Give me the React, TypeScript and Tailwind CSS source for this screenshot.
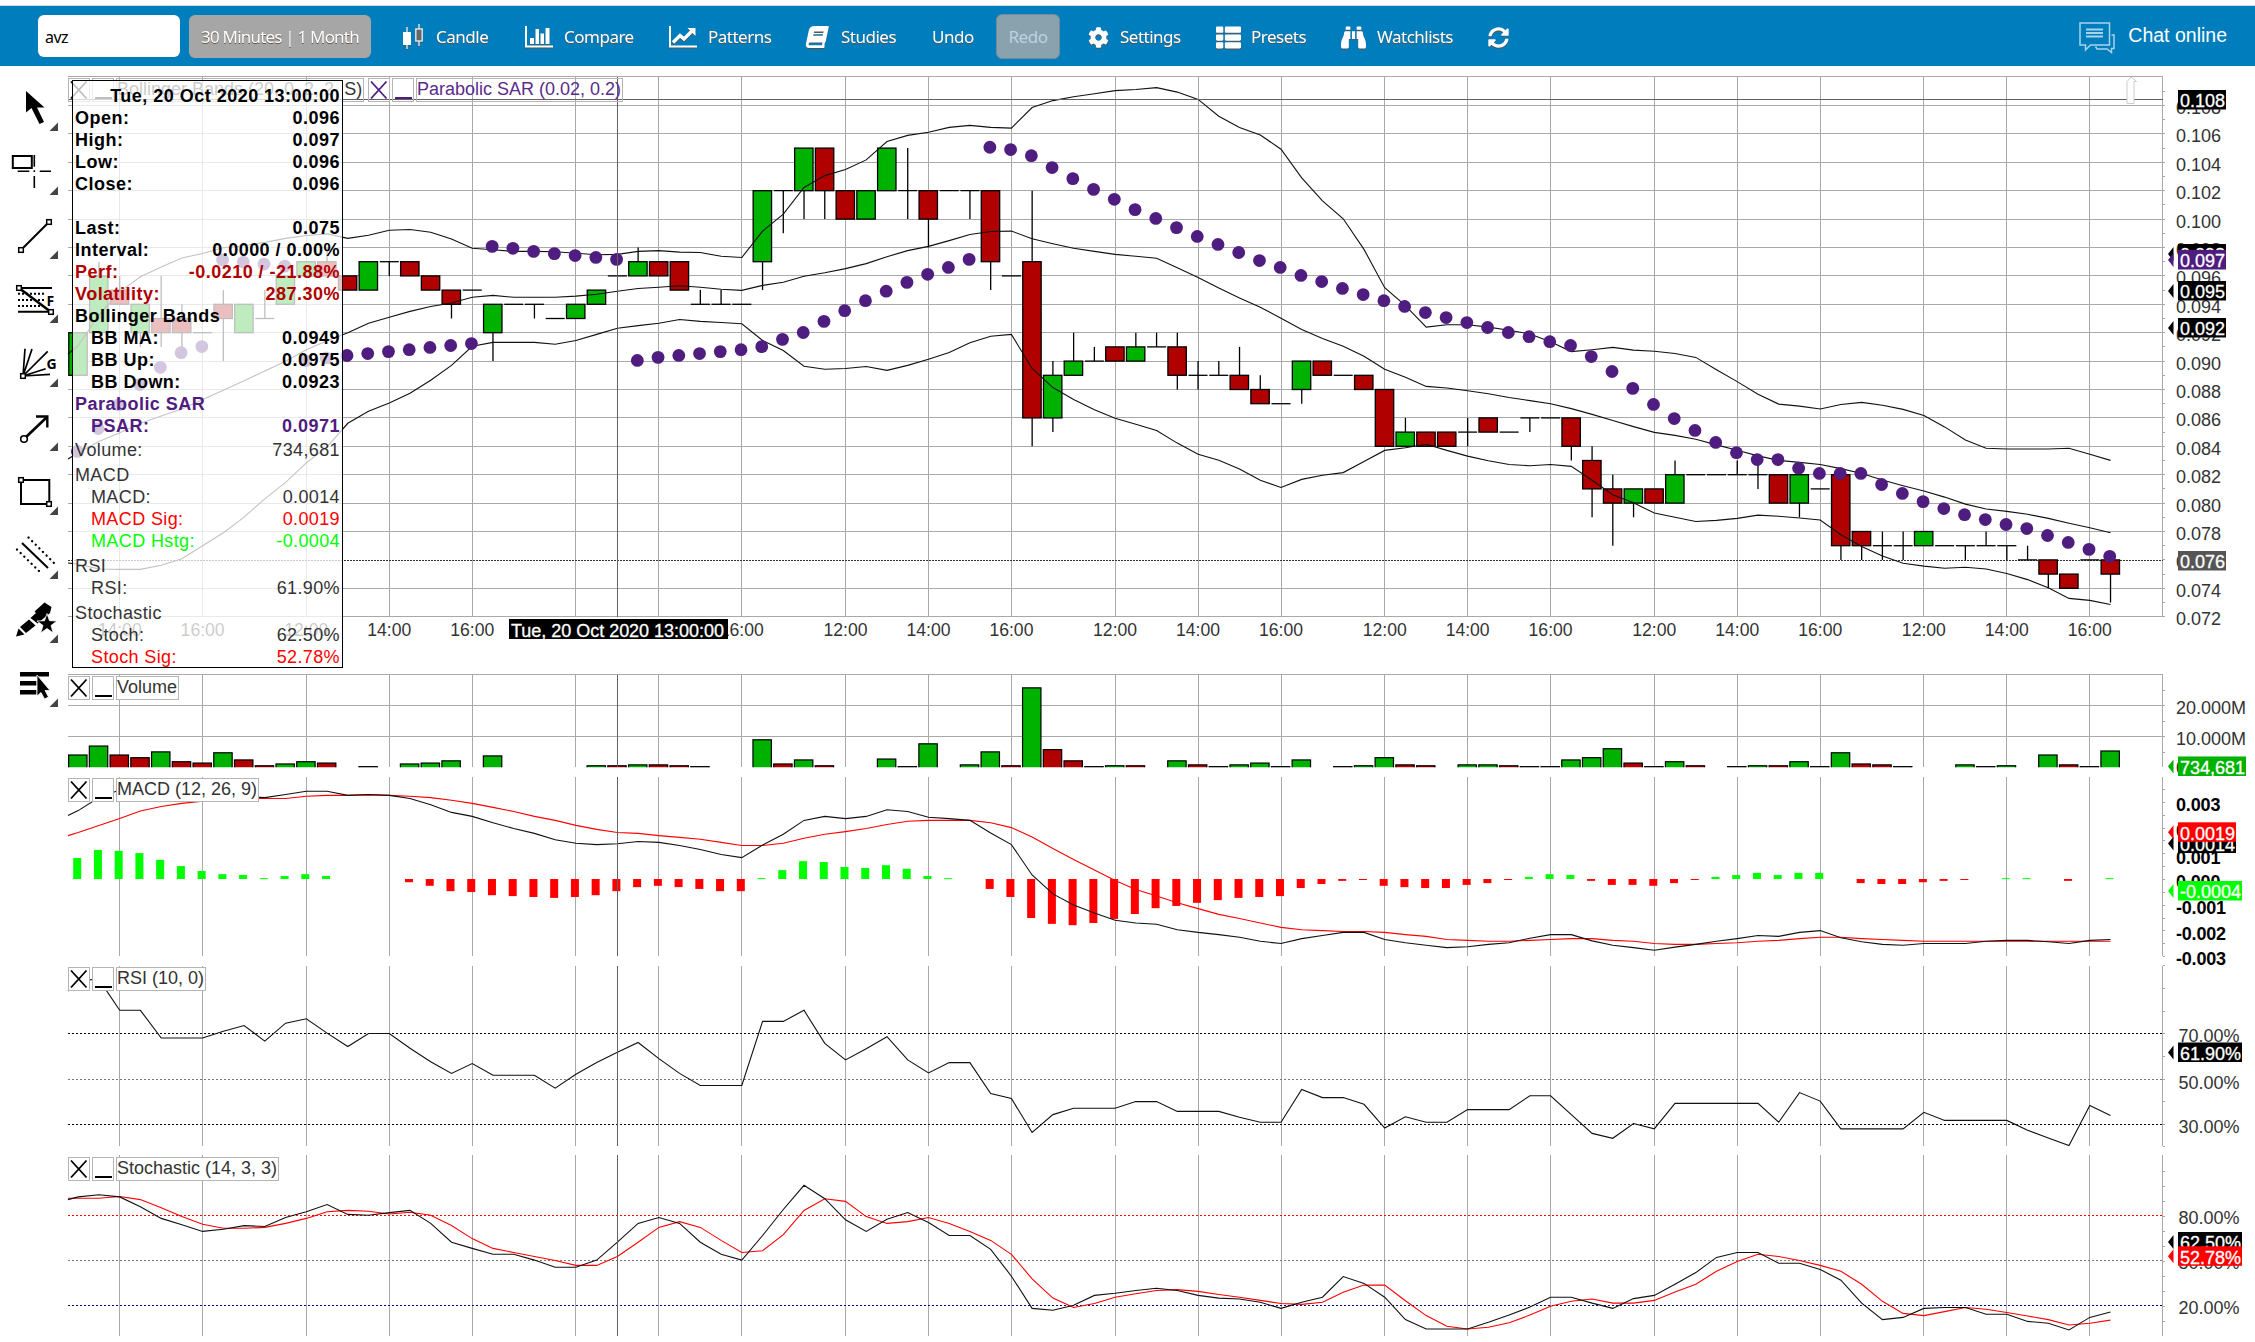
import React from 'react';
import { FaCog, FaThList, FaBinoculars, FaSyncAlt, FaBook } from 'react-icons/fa';

const FIRST_X = 78.2;
const STEP = 20.738;
const LEFT = 68;
const RIGHT = 2162.5;
const CURSOR_X = 617.5;

const GREEN = '#00b200';
const RED = '#b00000';
const PURPLE = '#4f1c80';
const GRID = '#a9a9a9';

const barX = (i: number) => FIRST_X + i * STEP;
const priceY = (p: number) => 105.5 + (108 - p) * 14.2;

const chunk = (k: number, top: number, values: number[]) => values.map((v) => top + v / k);
const lower = (values: (number | null)[]) => values.map((v) => (v === null ? null : 640 + v / 2.2336));

const toPath = (values: (number | null)[], start?: number) => {
  const points = values.map((y, i) => `${barX(i).toFixed(1)},${(y ?? 0).toFixed(1)}`);
  if (start !== undefined) points.unshift(`${LEFT},${start.toFixed(1)}`);
  return points.join(' ');
};

const gridBars = [
  { i: 2, label: '14:00' }, { i: 6, label: '16:00' }, { i: 11, label: '12:00' }, { i: 15, label: '14:00' },
  { i: 19, label: '16:00' }, { i: 24, label: '' }, { i: 28, label: '' }, { i: 32, label: '16:00' },
  { i: 37, label: '12:00' }, { i: 41, label: '14:00' }, { i: 45, label: '16:00' }, { i: 50, label: '12:00' },
  { i: 54, label: '14:00' }, { i: 58, label: '16:00' }, { i: 63, label: '12:00' }, { i: 67, label: '14:00' },
  { i: 71, label: '16:00' }, { i: 76, label: '12:00' }, { i: 80, label: '14:00' }, { i: 84, label: '16:00' },
  { i: 89, label: '12:00' }, { i: 93, label: '14:00' }, { i: 97, label: '16:00' },
];

// open, close, high, low
const candles: number[][] = [
  [89, 92, 92, 89], [92, 96, 97, 92], [95, 94, 96, 94], [92, 94, 94, 91], [93, 92, 96, 91], [93, 92, 94, 91],
  [92, 92, 92, 92], [94, 93, 95, 90], [92, 94, 94, 92], [93, 93, 95, 93], [94, 96, 96, 94], [96, 97, 97, 96],
  [97, 96, 98, 96], [96, 95, 96, 95], [95, 97, 97, 95], [97, 97, 97, 96], [97, 96, 97, 96], [96, 95, 96, 95],
  [95, 94, 95, 93], [95, 95, 95, 95], [92, 94, 94, 90], [94, 94, 94, 94], [94, 94, 94, 93], [93, 93, 93, 93],
  [93, 94, 94, 93], [94, 95, 95, 94], [96, 96, 96, 96], [96, 97, 98, 96], [97, 96, 97, 96], [97, 95, 97, 95],
  [94, 94, 95, 94], [94, 94, 95, 94], [94, 94, 94, 94], [97, 102, 102, 95], [102, 102, 102, 99], [102, 105, 105, 100],
  [105, 102, 105, 100], [102, 100, 102, 100], [100, 102, 102, 100], [102, 105, 105, 102], [102, 102, 105, 100],
  [102, 100, 102, 98], [102, 102, 102, 102], [102, 102, 102, 100], [102, 97, 102, 95], [96, 96, 96, 96],
  [97, 86, 102, 84], [86, 89, 90, 85], [89, 90, 92, 89], [90, 90, 91, 90], [91, 90, 91, 90], [90, 91, 92, 90],
  [91, 91, 92, 91], [91, 89, 92, 88], [89, 89, 90, 88], [89, 89, 90, 89], [89, 88, 91, 88], [88, 87, 89, 87],
  [87, 87, 87, 87], [88, 90, 90, 87], [90, 89, 90, 89], [89, 89, 89, 89], [89, 88, 89, 88], [88, 84, 88, 84],
  [84, 85, 86, 84], [85, 84, 85, 84], [85, 84, 85, 84], [85, 85, 86, 84], [86, 85, 86, 85], [85, 85, 85, 85],
  [86, 86, 86, 85], [86, 86, 86, 86], [86, 84, 86, 83], [83, 81, 84, 79], [81, 80, 82, 77], [80, 81, 81, 79],
  [81, 80, 81, 80], [80, 82, 83, 80], [82, 82, 82, 82], [82, 82, 82, 82], [82, 82, 83, 82], [82, 82, 83, 81],
  [82, 80, 82, 80], [80, 82, 82, 79], [81, 81, 81, 81], [82, 77, 82, 76], [78, 77, 78, 76], [77, 77, 78, 76],
  [77, 77, 78, 76], [77, 78, 78, 77], [77, 77, 77, 77], [77, 77, 77, 76], [77, 77, 78, 77], [77, 77, 77, 76],
  [76, 76, 77, 76], [76, 75, 76, 74], [75, 74, 75, 74], [76, 76, 76, 76], [76, 75, 76, 73],
];

const bandUp = [
  ...chunk(2.45, 60, [700, 625, 568, 531, 507, 485, 474, 460, 455, 447, 437, 430, 426, 437]),
  ...chunk(2.613, 60, [
    458, 445, 443, 450, 468, 492, 496, 500, 500, 501, 505, 509, 508, 500, 498, 502, 503, 513, 516, 447, 403, 333,
    302, 286, 261, 213, 197, 189, 176, 171, 176, 178, 124, 106, 96, 88, 80, 77, 72, 84, 103, 147, 176, 196, 233,
    308, 368, 415, 495, 595, 642, 698, 692, 692, 698, 706, 716, 736, 762, 757, 751, 758, 761, 767, 777,
  ]),
  ...chunk(2.45, 0, [
    906, 935, 966, 990, 995, 1002, 991, 986, 993, 1003, 1018, 1046, 1078, 1098, 1100, 1100, 1100, 1098, 1113, 1128,
  ]),
];

const bandMid = [
  ...chunk(2.45, 60, [962, 935, 913, 890, 872, 855, 832, 809, 786, 762, 738, 710, 688, 668]),
  ...chunk(2.613, 60, [
    688, 672, 657, 644, 635, 620, 615, 620, 620, 620, 617, 612, 604, 597, 594, 590, 594, 599, 602, 589, 581, 565,
    556, 545, 532, 514, 498, 487, 472, 456, 448, 447, 467, 480, 492, 500, 508, 513, 518, 543, 568, 596, 622, 646,
    675, 704, 728, 748, 774, 808, 829, 853, 857, 864, 872, 882, 890, 898, 911, 926, 942, 958, 973, 981, 991,
  ]),
  ...chunk(2.45, 0, [
    1090, 1103, 1117, 1128, 1133, 1138, 1148, 1160, 1176, 1190, 1203, 1218, 1235, 1247, 1253, 1260, 1270, 1282,
    1293, 1305,
  ]),
];

const bandDown = [
  ...chunk(2.45, 60, [1235, 1247, 1248, 1248, 1238, 1222, 1190, 1158, 1120, 1075, 1035, 987, 948, 890]),
  ...chunk(2.613, 60, [
    918, 896, 871, 837, 798, 748, 738, 738, 738, 743, 733, 717, 701, 694, 688, 678, 683, 686, 689, 733, 759, 800,
    808, 806, 801, 811, 798, 782, 764, 739, 722, 717, 806, 856, 887, 914, 936, 952, 968, 1001, 1030, 1046, 1069,
    1098, 1117, 1096, 1085, 1078, 1049, 1020, 1013, 1004, 1020, 1035, 1047, 1057, 1060, 1057, 1062, 1098, 1136,
    1157, 1184, 1195, 1206,
  ]),
  ...chunk(2.45, 0, [
    1275, 1270, 1262, 1265, 1269, 1274, 1310, 1339, 1362, 1380, 1387, 1392, 1390, 1394, 1405, 1420, 1440, 1466,
    1471, 1481,
  ]),
];

const psar = [
  ...chunk(2.45, 60, [959, 903, 845, 795, 753, 717, 702, 490, 495, 500, 505, 737, 730, 724]),
  ...chunk(2.613, 60, [
    767, 762, 757, 751, 746, 741, 487, 492, 500, 506, 511, 516, 521, 785, 777, 772, 767, 762, 757, 749, 730, 712,
    683, 655, 629, 604, 581, 560, 542, 521, 228, 234, 250, 281, 310, 338, 364, 391, 414, 438, 461, 482, 503, 524,
    542, 563, 579, 597, 613, 629, 644, 660, 673, 686, 699, 712, 723, 736, 746, 775, 814, 858, 900, 937, 968,
  ]),
  ...chunk(2.45, 0, [
    1084, 1109, 1126, 1126, 1147, 1160, 1160, 1160, 1187, 1209, 1229, 1246, 1261, 1273, 1285, 1295, 1312, 1329,
    1346, 1363,
  ]),
];

const volumes: [number, number, string][] = [
  [0, 256, 'g'], [1, 236, 'g'], [2, 256, 'r'], [3, 262, 'r'], [4, 249, 'g'], [5, 271, 'r'], [6, 274, 'r'],
  [7, 251, 'g'], [8, 267, 'r'], [9, 280, 'r'], [10, 276, 'g'], [11, 271, 'g'], [12, 274, 'r'], [14, 282, 'k'],
  [16, 276, 'g'], [17, 274, 'g'], [18, 269, 'g'], [20, 258, 'g'], [25, 280, 'g'], [26, 280, 'r'], [27, 278, 'g'],
  [28, 278, 'r'], [29, 280, 'r'], [30, 282, 'k'], [33, 222, 'g'], [34, 276, 'r'], [35, 267, 'g'], [36, 280, 'r'],
  [39, 265, 'g'], [40, 282, 'k'], [41, 231, 'g'], [43, 278, 'g'], [44, 249, 'g'], [45, 280, 'r'], [46, 106, 'g'],
  [47, 244, 'r'], [48, 269, 'r'], [49, 282, 'k'], [50, 280, 'g'], [51, 280, 'r'], [53, 269, 'g'], [54, 278, 'r'],
  [55, 282, 'k'], [56, 278, 'g'], [57, 274, 'g'], [58, 282, 'k'], [59, 267, 'g'], [61, 282, 'k'], [62, 280, 'g'],
  [63, 262, 'g'], [64, 278, 'r'], [65, 280, 'r'], [67, 278, 'g'], [68, 278, 'g'], [69, 280, 'r'], [70, 282, 'k'],
  [71, 282, 'k'], [72, 267, 'g'], [73, 262, 'g'], [74, 242, 'g'], [75, 274, 'r'], [76, 282, 'k'], [77, 271, 'g'],
  [78, 280, 'r'], [80, 282, 'k'], [81, 280, 'g'], [82, 280, 'r'], [83, 271, 'g'], [84, 282, 'k'], [85, 251, 'g'],
  [86, 276, 'r'], [87, 278, 'r'], [88, 282, 'k'], [91, 278, 'g'], [92, 282, 'k'], [93, 280, 'g'], [95, 256, 'g'],
  [96, 278, 'r'], [97, 282, 'k'], [98, 247, 'g'],
];

const histogram = lower([
  487, 469, 471, 476, 491, 505, 516, 523, 525, 532, 527, 523, 527, null, null, null, 541, 549, 561, 563, 570, 572,
  574, 576, 574, 570, 561, 552, 549, 552, 556, 561, 561, 532, 514, 494, 496, 507, 509, 503, 511, 527, 532, null,
  556, 574, 621, 634, 637, 632, 623, 612, 599, 594, 587, 581, 576, 574, 572, 554, 545, 538, 536, 549, 552, 554,
  554, 547, 543, 536, 529, 523, 525, 538, 547, 547, 549, 543, 536, 529, 525, 520, 525, 520, 520, null, 543, 545,
  545, 541, 538, 536, null, 532, 532, null, 538, null, 532,
]);

const macd = lower([
  381, 352, 335, 330, 333, 337, 342, 346, 350, 352, 345, 338, 338, 347, 345, 347, 354, 368, 385, 394, 408, 421,
  432, 446, 454, 457, 455, 450, 452, 459, 468, 479, 486, 458, 434, 403, 394, 399, 394, 379, 383, 396, 399, 403,
  431, 457, 525, 567, 592, 610, 626, 632, 635, 647, 653, 658, 664, 673, 678, 667, 660, 653, 653, 669, 676, 682,
  687, 685, 680, 676, 666, 658, 658, 672, 682, 687, 693, 686, 680, 673, 667, 660, 662, 653, 649, 665, 674, 680,
  682, 678, 678, 678, 673, 671, 671, 674, 678, 671, 669,
]);

const macdSignal = lower([
  430, 414, 399, 382, 372, 365, 360, 357, 354, 354, 354, 349, 347, 347, 346, 347, 349, 352, 358, 365, 374, 383,
  394, 403, 414, 423, 430, 432, 437, 441, 445, 452, 459, 459, 454, 443, 434, 428, 421, 412, 405, 403, 403, 403,
  408, 419, 440, 466, 490, 514, 537, 557, 572, 587, 600, 613, 622, 632, 642, 647, 649, 651, 651, 653, 658, 662,
  669, 671, 673, 673, 671, 669, 667, 667, 671, 673, 678, 680, 680, 678, 676, 673, 671, 667, 664, 664, 667, 669,
  671, 673, 673, 673, 673, 673, 673, 673, 673, 673, 673,
]);

const rsi = lower([
  760, 758, 827, 827, 889, 889, 889, 874, 861, 896, 856, 846, 878, 908, 879, 879, 912, 942, 968, 946, 972, 972,
  972, 1001, 970, 944, 921, 899, 935, 968, 995, 995, 995, 852, 852, 827, 901, 938, 913, 886, 938, 967, 944, 944,
  1013, 1024, 1100, 1060, 1046, 1046, 1046, 1031, 1031, 1053, 1053, 1053, 1066, 1077, 1077, 1004, 1022, 1022,
  1037, 1090, 1065, 1077, 1077, 1049, 1049, 1049, 1018, 1018, 1060, 1102, 1113, 1080, 1092, 1035, 1035, 1035,
  1035, 1035, 1077, 1011, 1030, 1092, 1092, 1092, 1092, 1055, 1073, 1073, 1073, 1073, 1095, 1112, 1129, 1040,
  1062,
]);

const stoch = lower([
  1244, 1239, 1244, 1266, 1292, 1306, 1321, 1316, 1308, 1310, 1290, 1277, 1261, 1283, 1285, 1279, 1274, 1303,
  1345, 1359, 1372, 1372, 1385, 1401, 1401, 1385, 1345, 1303, 1290, 1303, 1345, 1372, 1385, 1330, 1272, 1218,
  1248, 1295, 1321, 1294, 1279, 1301, 1330, 1330, 1361, 1421, 1493, 1497, 1486, 1464, 1459, 1453, 1448, 1453,
  1464, 1470, 1472, 1479, 1493, 1479, 1468, 1422, 1437, 1468, 1518, 1539, 1539, 1539, 1524, 1508, 1490, 1468,
  1468, 1481, 1493, 1471, 1464, 1439, 1413, 1379, 1368, 1368, 1392, 1392, 1406, 1430, 1481, 1518, 1513, 1493,
  1491, 1491, 1506, 1506, 1522, 1526, 1541, 1513, 1501,
]);

const stochSignal = lower([
  1247, 1247, 1243, 1250, 1268, 1288, 1305, 1314, 1314, 1312, 1303, 1292, 1277, 1274, 1276, 1282, 1278, 1285,
  1308, 1337, 1359, 1368, 1377, 1386, 1397, 1397, 1377, 1345, 1312, 1299, 1312, 1341, 1368, 1364, 1328, 1274,
  1248, 1254, 1288, 1303, 1299, 1290, 1303, 1321, 1341, 1372, 1427, 1470, 1491, 1482, 1468, 1460, 1453, 1451,
  1455, 1462, 1468, 1475, 1482, 1484, 1479, 1457, 1441, 1441, 1476, 1509, 1533, 1539, 1535, 1525, 1508, 1488,
  1477, 1472, 1481, 1481, 1475, 1456, 1439, 1410, 1388, 1372, 1377, 1386, 1397, 1410, 1439, 1477, 1504, 1509,
  1500, 1491, 1495, 1502, 1510, 1518, 1530, 1526, 1519,
]);

interface TagProps {
  y: number;
  w?: number;
  fill: string;
  text: string;
  arrow?: boolean;
}

const Tag: React.FC<TagProps> = ({ y, w = 48, fill, text, arrow = true }) => (
  <g>
    {arrow && <path d={`M2168,${y + 10} L2173.5,${y + 3} V${y + 17} Z`} fill={fill} />}
    <rect x={2178} y={y} width={w} height={19.5} fill={fill} />
    <text x={2180} y={y + 17.3} fontSize={18} fill="#fff" stroke="#fff" strokeWidth={0.3}>{text}</text>
  </g>
);

interface AxisTextProps {
  y: number;
  text: string;
  x?: number;
  bold?: boolean;
}

const AxisText: React.FC<AxisTextProps> = ({ y, text, x = 2176, bold }) => (
  <text x={x} y={y + 6.5} fontSize={18} fill={bold ? '#000' : '#333'} fontWeight={bold ? 700 : 400} textLength={bold ? (text.startsWith('-') ? 50 : 44.5) : undefined}>
    {text}
  </text>
);

const Legend: React.FC<{ label: string; color?: string; labelClass: string; solid?: boolean }> = ({
  label,
  color = '#000',
  labelClass,
  solid = true,
}) => {
  const box = solid ? 'border border-[#b5b5b5] bg-white' : 'border border-[#b5b5b5]';
  return (
    <div className="flex h-6 gap-[2px]">
      <div className={`w-[22px] shrink-0 ${box}`}>
        <svg width="20" height="22" viewBox="0 0 20 22">
          <path d="M2,2.5 L17.5,19.5 M17.5,2.5 L2,19.5" stroke={color} strokeWidth="1.8" />
        </svg>
      </div>
      <div className={`flex w-[22px] shrink-0 items-end justify-center pb-[2px] ${box}`}>
        <span className="h-[2px] w-[17px]" style={{ background: color }} />
      </div>
      <div className={`shrink-0 whitespace-nowrap text-[18px] leading-[21px] ${labelClass} ${box}`}>{label}</div>
    </div>
  );
};

interface PanelProps {
  top: number;
  height: number;
  plotTop: number;
  plotBottom: number;
  ticks: number[];
  legend: React.ReactNode;
  children: React.ReactNode;
}

const Panel: React.FC<PanelProps> = ({ top, height, plotTop, plotBottom, ticks, legend, children }) => (
  <section className="relative shrink-0" style={{ height }}>
    <svg className="block overflow-visible" width={2189} height={height} viewBox={`66 ${top} 2189 ${height}`}>
      <g stroke={GRID} shapeRendering="crispEdges">
        {gridBars.map((g) => (
          <line key={g.i} x1={barX(g.i)} x2={barX(g.i)} y1={plotTop} y2={plotBottom} />
        ))}
        <line x1={RIGHT} x2={RIGHT} y1={plotTop} y2={plotBottom} />
        {ticks.map((y) => (
          <line key={y} x1={RIGHT} x2={RIGHT + 2.5} y1={y} y2={y} />
        ))}
      </g>
      {children}
      <line x1={CURSOR_X} x2={CURSOR_X} y1={plotTop} y2={plotBottom} stroke="#606060" shapeRendering="crispEdges" />
    </svg>
    <div className="absolute left-[2px]" style={{ top: Math.floor(plotTop - top) + 2 }}>{legend}</div>
  </section>
);

const range = (from: number, step: number, count: number) => Array.from({ length: count }, (_, n) => from + n * step);

const PricePanel = () => (
  <Panel
    top={66}
    height={604}
    plotTop={76.5}
    plotBottom={616.5}
    ticks={range(91.3, 14.2, 38)}
    legend={
      <div className="flex gap-1">
        <Legend label="Bollinger Bands (20, 0, 2, 2, S)" labelClass="w-[248px] text-right pr-px text-[#333]" solid={false} />
        <Legend label="Parabolic SAR (0.02, 0.2)" color={PURPLE} labelClass="w-[207px] text-[#5b2c8c]" solid={false} />
      </div>
    }
  >
    <g stroke={GRID} shapeRendering="crispEdges">
      <line x1={LEFT} x2={RIGHT} y1={76.5} y2={76.5} />
      {range(72, 2, 19).filter((p) => p !== 76).map((p) => (
        <line key={p} x1={LEFT} x2={RIGHT} y1={priceY(p)} y2={priceY(p)} />
      ))}
    </g>
    <line x1={LEFT} x2={RIGHT} y1={560.5} y2={560.5} stroke="#333" strokeDasharray="2 1" shapeRendering="crispEdges" />
    <clipPath id="plot">
      <rect x={LEFT} y={76} width={RIGHT - LEFT} height={541} />
    </clipPath>
    <g clipPath="url(#plot)" stroke="#000">
      {candles.map(([open, close, high, low], i) => {
        const x = barX(i);
        const bodyTop = priceY(Math.max(open, close));
        return (
          <g key={i} strokeWidth={1.3}>
            <line x1={x} x2={x} y1={priceY(high)} y2={priceY(low)} />
            {open === close ? (
              <line x1={x - 9.5} x2={x + 9.5} y1={bodyTop} y2={bodyTop} />
            ) : (
              <rect x={x - 9.4} y={bodyTop} width={18.4} height={Math.abs(open - close) * 14.2} fill={close > open ? GREEN : RED} />
            )}
          </g>
        );
      })}
    </g>
    <g fill="none" stroke="#111" strokeWidth={1.1}>
      <polyline points={toPath(bandUp, 354)} />
      <polyline points={toPath(bandMid, 459)} />
      <polyline points={toPath(bandDown, 563)} />
    </g>
    {psar.map((y, i) => (
      <circle key={i} cx={barX(i) - 0.8} cy={y} r={6.4} fill={PURPLE} />
    ))}
    <line x1={LEFT} x2={RIGHT} y1={99.5} y2={99.5} stroke="#606060" shapeRendering="crispEdges" />
    <path d="M2127,103.5 V81.5 L2131,77 L2136.5,81.5 H2134 V103.5 Z" fill="#fff" stroke="#ccc" />

    {range(72, 2, 19).map((p) => (
      <AxisText key={p} y={priceY(p) + 2} text={(p / 1000).toFixed(3)} />
    ))}
    <Tag y={90} fill="#000" text="0.108" arrow={false} />
    <Tag y={244} fill="#000" text="0.098" />
    <Tag y={250} fill={PURPLE} text="0.097" />
    <Tag y={281} fill="#000" text="0.095" />
    <Tag y={318} fill="#000" text="0.092" />
    <Tag y={551} fill="#555" text="0.076" arrow={false} />

    {gridBars.map((g) => (
      <text key={g.i} x={barX(g.i)} y={636} fontSize={17.6} textAnchor="middle" fill="#333">{g.label}</text>
    ))}
    <rect x={509} y={619} width={219} height={20} fill="#000" />
    <text x={511} y={636.5} fontSize={18} fill="#fff" stroke="#fff" strokeWidth={0.3} textLength={213}>Tue, 20 Oct 2020 13:00:00</text>
  </Panel>
);

const VolumePanel = () => (
  <Panel
    top={670}
    height={102}
    plotTop={674.5}
    plotBottom={767}
    ticks={range(690.5, 15.4, 5)}
    legend={<Legend label="Volume" labelClass="w-[63px] text-[#333]" />}
  >
    <g stroke={GRID} shapeRendering="crispEdges">
      {[674.5, 705.5, 736.5].map((y) => (
        <line key={y} x1={LEFT} x2={RIGHT} y1={y} y2={y} />
      ))}
    </g>
    <clipPath id="volume">
      <rect x={LEFT} y={670} width={RIGHT - LEFT} height={97.3} />
    </clipPath>
    <g clipPath="url(#volume)" stroke="#000" strokeWidth={1.2}>
      {volumes.map(([i, v, tone]) => (
        <rect key={i} x={barX(i) - 9.6} y={640.4 + v / 2.2336} width={18.4} height={(290 - v) / 2.2336} fill={tone === 'r' ? RED : tone === 'g' ? GREEN : '#000'} />
      ))}
    </g>
    <AxisText y={707.6} text="20.000M" />
    <AxisText y={738.6} text="10.000M" />
    <AxisText y={767} text="0" />
    <Tag y={756.5} w={68} fill={GREEN} text="734,681" />
  </Panel>
);

const BASE = 879;

const MacdPanel = () => (
  <Panel
    top={772}
    height={189}
    plotTop={776.5}
    plotBottom={956}
    ticks={range(789.5, 12.85, 14)}
    legend={<Legend label="MACD (12, 26, 9)" labelClass="w-[143px] text-[#333]" />}
  >
    {histogram.map((y, i) =>
      y === null ? null : (
        <rect key={i} x={barX(i) - 5} y={Math.min(y, BASE)} width={8} height={Math.max(Math.abs(y - BASE), 1)} fill={y < BASE ? '#0f0' : '#f00'} />
      ),
    )}
    <g fill="none" strokeWidth={1.1}>
      <polyline points={toPath(macdSignal, 835.6)} stroke="#f00" />
      <polyline points={toPath(macd, 815.5)} stroke="#111" />
    </g>
    <AxisText y={804.8} text="0.003" bold />
    <AxisText y={830} text="0.002" bold />
    <AxisText y={857} text="0.001" bold />
    <AxisText y={881} text="0.000" bold />
    <AxisText y={907.7} text="-0.001" bold />
    <AxisText y={933.7} text="-0.002" bold />
    <AxisText y={958.8} text="-0.003" bold />
    <Tag y={833.5} w={58} fill="#000" text="0.0014" />
    <Tag y={822.3} w={58} fill="#f00" text="0.0019" />
    <Tag y={881} w={64} fill="#0f0" text="-0.0004" />
  </Panel>
);

const RsiPanel = () => (
  <Panel
    top={961}
    height={189}
    plotTop={965.5}
    plotBottom={1146}
    ticks={[965.5, 988.3, 1011, 1033.5, 1056.4, 1079.6, 1101.6, 1124.4, 1146]}
    legend={<Legend label="RSI (10, 0)" labelClass="w-[90px] text-[#333]" />}
  >
    <g strokeDasharray="2 2" shapeRendering="crispEdges">
      <line x1={LEFT} x2={RIGHT} y1={1033.5} y2={1033.5} stroke="#000" />
      <line x1={LEFT} x2={RIGHT} y1={1079.5} y2={1079.5} stroke="#777" />
      <line x1={LEFT} x2={RIGHT} y1={1124.5} y2={1124.5} stroke="#000" />
    </g>
    <polyline points={toPath(rsi, 991)} fill="none" stroke="#111" strokeWidth={1.1} />
    <AxisText y={1035.5} x={2178.5} text="70.00%" />
    <AxisText y={1082} x={2178.5} text="50.00%" />
    <AxisText y={1126.8} x={2178.5} text="30.00%" />
    <Tag y={1042.5} w={64} fill="#000" text="61.90%" />
  </Panel>
);

const StochasticPanel = () => (
  <Panel
    top={1150}
    height={192}
    plotTop={1155}
    plotBottom={1335.5}
    ticks={range(1171.5, 15, 11)}
    legend={<Legend label="Stochastic (14, 3, 3)" labelClass="w-[163px] text-[#333]" />}
  >
    <g strokeDasharray="2 2" shapeRendering="crispEdges">
      <line x1={LEFT} x2={RIGHT} y1={1215.5} y2={1215.5} stroke="#f00" />
      <line x1={LEFT} x2={RIGHT} y1={1260.5} y2={1260.5} stroke="#777" />
      <line x1={LEFT} x2={RIGHT} y1={1305.5} y2={1305.5} stroke="#000080" />
    </g>
    <g fill="none" strokeWidth={1.1}>
      <polyline points={toPath(stochSignal, 1198.3)} stroke="#f00" />
      <polyline points={toPath(stoch, 1199.6)} stroke="#111" />
    </g>
    <AxisText y={1217.5} x={2178.5} text="80.00%" />
    <AxisText y={1262.8} x={2178.5} text="50.00%" />
    <AxisText y={1307.5} x={2178.5} text="20.00%" />
    <Tag y={1232} w={64} fill="#000" text="62.50%" />
    <Tag y={1246.3} w={64} fill="#f00" text="52.78%" />
  </Panel>
);

interface Reading {
  label: string;
  value?: string;
  cls?: string;
}

const readings: Reading[] = [
  { label: 'Open:', value: '0.096' },
  { label: 'High:', value: '0.097' },
  { label: 'Low:', value: '0.096' },
  { label: 'Close:', value: '0.096' },
  { label: '' },
  { label: 'Last:', value: '0.075' },
  { label: 'Interval:', value: '0.0000 / 0.00%' },
  { label: 'Perf:', value: '-0.0210 / -21.88%', cls: 'text-[#b00000]' },
  { label: 'Volatility:', value: '287.30%', cls: 'text-[#b00000]' },
  { label: 'Bollinger Bands' },
  { label: 'BB MA:', value: '0.0949', cls: 'pl-4' },
  { label: 'BB Up:', value: '0.0975', cls: 'pl-4' },
  { label: 'BB Down:', value: '0.0923', cls: 'pl-4' },
  { label: 'Parabolic SAR', cls: 'text-[#4f1c80]' },
  { label: 'PSAR:', value: '0.0971', cls: 'pl-4 text-[#4f1c80]' },
];

const lightReadings: Reading[] = [
  { label: 'Volume:', value: '734,681', cls: 'mt-[3px]' },
  { label: 'MACD', cls: 'mt-[3px]' },
  { label: 'MACD:', value: '0.0014', cls: 'pl-4' },
  { label: 'MACD Sig:', value: '0.0019', cls: 'pl-4 text-[#f00]' },
  { label: 'MACD Hstg:', value: '-0.0004', cls: 'pl-4 text-[#0f0]' },
  { label: 'RSI', cls: 'mt-[3px]' },
  { label: 'RSI:', value: '61.90%', cls: 'pl-4' },
  { label: 'Stochastic', cls: 'mt-[3px]' },
  { label: 'Stoch:', value: '62.50%', cls: 'pl-4' },
  { label: 'Stoch Sig:', value: '52.78%', cls: 'pl-4 text-[#f00]' },
];

const ReadingRow: React.FC<{ row: Reading }> = ({ row }) => (
  <div className={`flex h-[22px] justify-between ${row.cls ?? ''}`}>
    <span>{row.label}</span>
    <span>{row.value}</span>
  </div>
);

const HoverBox = () => (
  <div className="absolute left-[72px] top-20 h-[588px] w-[271px] whitespace-nowrap border border-black bg-white/75 pl-[2px] pr-[2px] pt-1 text-[18px] leading-[22px] text-black">
    <div className="font-bold tracking-[0.48px]">
      <div className="h-[22px] text-right">Tue, 20 Oct 2020 13:00:00</div>
      {readings.map((row, i) => (
        <ReadingRow key={i} row={row} />
      ))}
    </div>
    <div className="-mt-px tracking-[0.38px] text-[#333]">
      {lightReadings.map((row, i) => (
        <ReadingRow key={i} row={row} />
      ))}
    </div>
  </div>
);

const Handle: React.FC<{ x: number; y: number }> = ({ x, y }) => (
  <rect x={x - 2.3} y={y - 2.3} width={4.6} height={4.6} fill="#fff" strokeWidth={1.5} />
);

const tools: React.ReactNode[] = [
  <path d="M26,21 V42.5 L31.5,38 L39.5,54 L44,52 L37,37.5 H44.5 Z" fill="#000" stroke="none" />,
  <g>
    <rect x="12.8" y="22" width="19" height="12" />
    <path d="M34.3,21 V32.7 M34.3,36.3 V38 M34.3,42 V54 M17.7,37.3 H29.3 M39.7,37.3 H51" strokeWidth="1.6" />
  </g>,
  <g>
    <path d="M21,52 L49,24" />
    <Handle x={21} y={52} />
    <Handle x={49} y={24} />
  </g>,
  <g>
    <path d="M19,26 H52 M18,49.7 H48" />
    <path d="M18,31.7 H44 M18,38 H44 M18,44 H44" strokeDasharray="2 2" />
    <path d="M19,26 L51,50" strokeWidth="2.6" />
    <Handle x={19} y={26} />
    <Handle x={51} y={50} />
    <text x="46.5" y="43.5" fontSize="14" fontWeight="700" fill="#000" stroke="none" className="font-['Open_Sans',sans-serif]">F</text>
  </g>,
  <g>
    <path d="M23,50 L25,22.7 M23,50 L32,23 M23,50 L47.7,25.3 M23,50 L45.7,42.7 M23,50 L50,48.3" strokeWidth="1.7" />
    <Handle x={23} y={50} />
    <text x="46.5" y="43" fontSize="14" fontWeight="700" fill="#000" stroke="none" className="font-['Open_Sans',sans-serif]">G</text>
  </g>,
  <g>
    <path d="M25,48 L47,27" strokeWidth="2.6" />
    <path d="M36,26.5 H47.3 V37.5" strokeWidth="2.4" />
    <circle cx="24" cy="49" r="3.3" fill="#fff" strokeWidth="1.6" />
  </g>,
  <g>
    <rect x="21" y="26" width="28.3" height="24" />
    <Handle x={21} y={26} />
    <Handle x={49} y={50} />
  </g>,
  <g>
    <path d="M22,25 L48,50" />
    <path d="M28.5,19.5 L54,45 M17,31.5 L42,56" strokeDasharray="0.1 5" strokeLinecap="round" strokeWidth="2.3" />
  </g>,
  <g fill="#000" stroke="none">
    <path d="M16,54.5 L18.5,46.5 L24.5,52.5 Z" />
    <path d="M20,45 L29,37.5 L35.5,43.5 L26,51 Z" />
    <path d="M30.5,36 L36,31 L34.5,29.5 L44.5,20.5 L51.5,25 L50,31 L37.5,41.5 Z" />
    <path d="M47,31.5 L49.5,38.7 L57,39 L51,43.5 L53.3,51 L47,46.5 L40.7,51 L43,43.5 L37,39 L44.5,38.7 Z" stroke="#fff" strokeWidth="0.8" />
  </g>,
  <g fill="#000" stroke="none">
    <path d="M20,26 H49 V30.4 H20 Z M20,35 H36.5 V39.6 H20 Z M20,44 H36.5 V48.6 H20 Z" />
    <path d="M37,29 V50 L41,46.5 L44.5,53 L48.5,51 L45,44.5 H50 Z" stroke="#fff" strokeWidth="0.8" />
  </g>,
];

const Toolbar = () => (
  <nav className="flex w-[66px] shrink-0 flex-col pt-1">
    {tools.map((icon, i) => (
      <button key={i} className="h-16 w-[66px]">
        <svg className="overflow-visible" width="66" height="64" viewBox="0 0 66 64" fill="none" stroke="#000" strokeWidth="2">
          {icon}
          <path d="M49.5,61 L58,61 V52.5 Z" fill="#444" stroke="none" />
        </svg>
      </button>
    ))}
  </nav>
);

const shadow = 'drop-shadow-[0_1px_0_rgba(90,80,70,0.9)]';

const CandleIcon = () => (
  <svg width="22" height="26" viewBox="0 0 22 26" fill="#fff">
    <path d="M4,3 V25" stroke="#fff" strokeWidth="1.2" />
    <rect x="0" y="8" width="8" height="13" />
    <path d="M16,0 V22" stroke="#fff" strokeWidth="1.2" />
    <rect x="12.8" y="5" width="6.4" height="12" fill="#666" stroke="#dce9f0" strokeWidth="1.4" />
  </svg>
);

const CompareIcon = () => (
  <svg width="28" height="22" viewBox="0 0 28 22" fill="#fff">
    <path d="M0,0 H2 V19.5 H28 V21.5 H0 Z M5,12 H9 V18 H5 Z M10.5,3 H14 V18 H10.5 Z M15.5,7.5 H19 V18 H15.5 Z M20.5,2 H24.5 V18 H20.5 Z" />
  </svg>
);

const PatternsIcon = () => (
  <svg width="28" height="22" viewBox="0 0 28 22" fill="#fff">
    <path d="M0,0 H2 V19.5 H28 V21.5 H0 Z" />
    <path d="M4,16.5 L11,9.5 L15,13 L23,5" fill="none" stroke="#fff" strokeWidth="3.4" />
    <path d="M18.5,2 H26.5 V10 Z" />
  </svg>
);

const ChatIcon = () => (
  <svg width="36" height="32" viewBox="0 0 36 32" fill="none" stroke="#a9d3ea" strokeWidth="1.5">
    <path d="M1,1 H30.5 V23 H11.5 L6.5,28 V23 H1 Z" />
    <path d="M32.5,13 H35 V26.5 H32.5 V30.5 L28,27 H18 L16.5,24.5" />
    <path d="M7,7.5 H24 M7,11 H24 M7,14.5 H24" strokeWidth="1.8" />
  </svg>
);

const MenuItem: React.FC<{ icon?: React.ReactNode; label?: string; width: string; gap?: string }> = ({
  icon,
  label,
  width,
  gap = 'w-8',
}) => (
  <button className={`mt-[2px] flex shrink-0 items-center ${shadow} ${width}`}>
    {icon && <span className={`flex shrink-0 ${gap}`}>{icon}</span>}
    <span>{label}</span>
  </button>
);

const Header = () => (
  <header className="mt-[5px] flex h-[61px] shrink-0 items-center whitespace-nowrap border-t border-[#cfd8dc] bg-[#007dbd] font-['Noto_Sans',sans-serif] text-[17px] tracking-[-0.5px] text-white">
    <input
      className="ml-[38px] h-[42px] w-[142px] shrink-0 rounded-md bg-white pl-[7px] pt-[2px] text-[16px] text-black"
      defaultValue="avz"
    />
    <button className="ml-[9px] mr-[32px] h-[43px] w-[182px] shrink-0 rounded-md bg-[#a6a6a6] pt-[2px] tracking-[-0.8px]">
      <span className={shadow}>30 Minutes | 1 Month</span>
    </button>
    <MenuItem icon={<CandleIcon />} label="Candle" width="w-[122px]" gap="w-[33px]" />
    <MenuItem icon={<CompareIcon />} label="Compare" width="w-[144px]" gap="w-[39px]" />
    <MenuItem icon={<PatternsIcon />} label="Patterns" width="w-[137px]" gap="w-[39px]" />
    <MenuItem icon={<FaBook size={22} className="-skew-x-12" />} label="Studies" width="w-[126px]" gap="w-[35px]" />
    <MenuItem label="Undo" width="w-[64px]" />
    <button className="mr-[28px] h-[45px] w-16 shrink-0 rounded-md border border-[#6f8d9c] bg-[#8aa2ae] pt-[2px] text-[#bcd3df]">Redo</button>
    <MenuItem icon={<FaCog size={21} />} label="Settings" width="w-[128px]" gap="w-[32px]" />
    <MenuItem icon={<FaThList size={25} />} label="Presets" width="w-[125px]" gap="w-[35px]" />
    <MenuItem icon={<FaBinoculars size={25} />} label="Watchlists" width="w-[147px]" gap="w-9" />
    <MenuItem icon={<FaSyncAlt size={21} />} width="w-[32px]" />
    <div className="ml-auto mt-[3px] flex items-center gap-[13px] pr-[28px] font-['Liberation_Sans',Arial,sans-serif] text-[19.5px] tracking-normal">
      <ChatIcon />
      <span className="-mt-1">Chat online</span>
    </div>
  </header>
);

const App: React.FC = () => {
  return (
    <div className="relative flex h-[1342px] w-[2255px] flex-col overflow-hidden bg-white font-['Liberation_Sans',Arial,sans-serif]">
      <Header />
      <div className="flex grow">
        <Toolbar />
        <main className="flex flex-col">
          <PricePanel />
          <VolumePanel />
          <MacdPanel />
          <RsiPanel />
          <StochasticPanel />
        </main>
      </div>
      <HoverBox />
    </div>
  );
};

export default App;
